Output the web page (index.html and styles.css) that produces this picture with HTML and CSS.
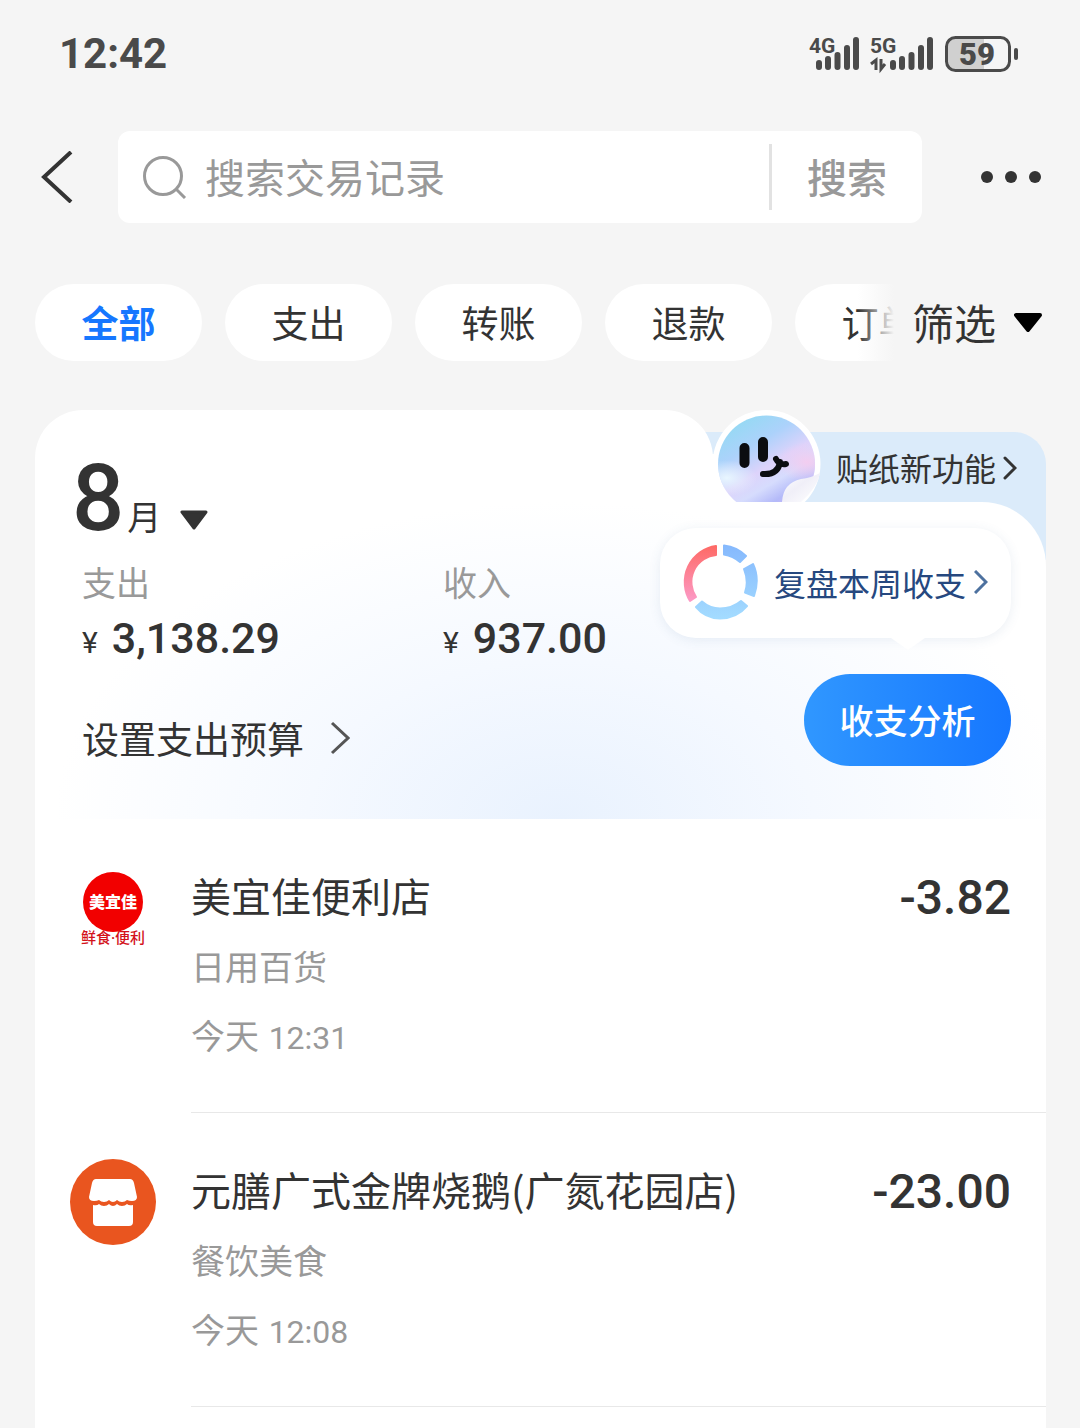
FILE: index.html
```html
<!DOCTYPE html>
<html lang="zh-CN">
<head>
<meta charset="utf-8">
<meta name="viewport" content="width=device-width, initial-scale=1">
<title>账单</title>
<link rel="stylesheet" href="styles.css">
</head>
<body>
<div class="status">
  <time class="clock">12:42</time>
  <svg class="indicators" width="210" height="40" viewBox="0 0 210 40" aria-hidden="true">
    <g fill="#4a4a4a" font-family="Roboto, sans-serif" font-weight="700" font-size="21">
      <text x="0" y="19">4G</text>
      <text x="61" y="19">5G</text>
    </g>
    <g fill="none" stroke="#4a4a4a" stroke-width="6" stroke-linecap="round">
      <path d="M10 29v4M19 25v8M28.500 21v12M38 14v19M47 6v27"/>
      <path d="M84 29v4M93 25v8M102.500 21v12M112 14v19M121 6v27"/>
    </g>
    <path d="M62 30l5-4v10M72 25v10l4-5" fill="none" stroke="#4a4a4a" stroke-width="3"/>
    <path d="M147 3h28v33h-28q-9 0-9-9V12q0-9 9-9z" fill="#d0d0d0"/>
    <rect x="137.500" y="3.500" width="63" height="33" rx="9" fill="none" stroke="#4a4a4a" stroke-width="3"/>
    <rect x="205" y="14" width="4" height="12" rx="2" fill="#4a4a4a"/>
    <text x="168" y="31" text-anchor="middle" fill="#4a4a4a" font-family="Roboto, sans-serif" font-weight="900" font-size="31">59</text>
  </svg>
</div>

<header class="topbar">
  <button class="icon-btn" type="button" aria-label="返回">
    <svg width="32" height="52" viewBox="0 0 32 52"><path d="M30 1L3 26l27 25" fill="none" stroke="#333" stroke-width="4"/></svg>
  </button>
  <form class="search">
    <svg width="44" height="44" viewBox="0 0 44 44" aria-hidden="true"><g fill="none" stroke="#999" stroke-width="3"><circle cx="20" cy="21" r="18.500"/><path d="M33 34l9 9"/></g></svg>
    <input class="search-input" type="search" placeholder="搜索交易记录" aria-label="搜索交易记录">
    <button class="search-btn" type="submit">搜索</button>
  </form>
  <button class="icon-btn" type="button" aria-label="更多">
    <svg width="60" height="12" viewBox="0 0 60 12" fill="#333"><circle cx="6" cy="6" r="6"/><circle cx="30" cy="6" r="6"/><circle cx="54" cy="6" r="6"/></svg>
  </button>
</header>

<nav class="filters">
  <div class="chips">
    <button class="chip chip-active" type="button">全部</button>
    <button class="chip" type="button">支出</button>
    <button class="chip" type="button">转账</button>
    <button class="chip" type="button">退款</button>
    <button class="chip" type="button">订单</button>
  </div>
  <button class="filter-btn" type="button"><span>筛选</span>
    <svg width="28" height="20" viewBox="0 0 28 20"><path d="M2 2h24L14 17z" stroke="#000" stroke-width="4" stroke-linejoin="round"/></svg>
  </button>
</nav>

<main class="card">
  <section class="summary">
    <a class="promo" href="#">
      <svg class="sticker" width="120" height="92" viewBox="0 0 120 92" aria-hidden="true">
        <defs>
          <linearGradient id="face" x1="0.200" y1="0" x2="0.800" y2="1">
            <stop offset="0" stop-color="#8ddcf1"/><stop offset=".3" stop-color="#acd2fb"/><stop offset=".5" stop-color="#ddd3fb"/><stop offset=".63" stop-color="#d6dcfd"/><stop offset=".76" stop-color="#b4baf9"/><stop offset="1" stop-color="#e7aef4"/>
          </linearGradient>
          <radialGradient id="glow"><stop offset="0" stop-color="#e8f6ff"/><stop offset="1" stop-color="#e8f6ff" stop-opacity="0"/></radialGradient>
          <radialGradient id="rose"><stop offset="0" stop-color="#f3cdf0"/><stop offset="1" stop-color="#f3cdf0" stop-opacity="0"/></radialGradient>
          <linearGradient id="curl" x1="0" y1="0" x2="1" y2="1"><stop offset="0" stop-color="#fff"/><stop offset=".45" stop-color="#f0eff8"/><stop offset="1" stop-color="#fff"/></linearGradient>
          <clipPath id="disc"><circle cx="61.500" cy="54" r="48.500"/></clipPath>
        </defs>
        <path d="M6 44v48h62L12 44z" fill="#fff"/>
        <circle cx="61.500" cy="54" r="54" fill="#fff"/>
        <g clip-path="url(#disc)">
          <path d="M10 0h110v110H10z" fill="url(#face)"/>
          <ellipse cx="22" cy="68" rx="30" ry="18" fill="url(#glow)"/>
          <ellipse cx="102" cy="52" rx="30" ry="20" fill="url(#rose)"/>
        </g>
        <path d="M77 92q1-19 19-23 10-1 19-6-2 14-19 29z" fill="url(#curl)"/>
        <g fill="none" stroke="#0b0d10" stroke-linecap="round">
          <path d="M39.500 38v15M58 32v15" stroke-width="10"/>
          <path d="M58 64q15 1 17-12M71 49q3 6 10 5" stroke-width="6"/>
        </g>
      </svg>
      <span>贴纸新功能</span>
      <svg width="14" height="24" viewBox="0 0 14 24" aria-hidden="true"><path d="M2 2l10 10L2 22" fill="none" stroke="#333" stroke-width="3" stroke-linecap="round"/></svg>
    </a>

    <div class="overview">
      <button class="month" type="button"><span class="month-num">8</span><span class="month-unit">月</span>
        <svg class="month-caret" width="28" height="20" viewBox="0 0 28 20"><path d="M2 2h24L14 18z" fill="#333" stroke="#333" stroke-width="3" stroke-linejoin="round"/></svg>
      </button>
      <dl class="stats">
        <div><dt>支出</dt><dd><span class="yen">¥</span>3,138.29</dd></div>
        <div><dt>收入</dt><dd><span class="yen">¥</span>937.00</dd></div>
      </dl>
      <a class="budget" href="#">设置支出预算
        <svg width="20" height="34" viewBox="0 0 20 34" aria-hidden="true"><path d="M2 2l16 15L2 32" fill="none" stroke="#555" stroke-width="3"/></svg>
      </a>
    </div>

    <div class="actions">
      <a class="bubble" href="#">
        <svg width="76" height="76" viewBox="0 0 76 76" aria-hidden="true">
          <defs>
            <linearGradient id="red" x1="0" y1="0" x2="0" y2="1"><stop offset="0" stop-color="#fe6a66"/><stop offset="1" stop-color="#fc9ac6"/></linearGradient>
            <linearGradient id="blue" gradientUnits="userSpaceOnUse" x1="0" y1="0" x2="0" y2="76"><stop offset="0" stop-color="#85b8fd"/><stop offset="1" stop-color="#a4dcff"/></linearGradient>
          </defs>
          <g stroke-width="2" stroke-linejoin="round">
            <path d="M34 2v9A27 27 0 0 0 14 53l-6 4A36.500 36.500 0 0 1 34 2z" fill="url(#red)" stroke="url(#red)"/>
            <path d="M42 1.500Q55 3 64 12l-6 6q-7-6-16-7.500zM71 20q7 15 1 32l-9-3.500q4-11-1-23.500zM65 62q-10 12-27 12.500Q23 74 14 63l6-5.500q8 7 18 7 12 0 21-7.500z" fill="url(#blue)" stroke="url(#blue)"/>
          </g>
        </svg>
        <span>复盘本周收支</span>
        <svg width="14" height="24" viewBox="0 0 14 24" aria-hidden="true"><path d="M1 1l11 11L1 23" fill="none" stroke="#4d719f" stroke-width="3"/></svg>
      </a>
      <button class="analyze" type="button">收支分析</button>
    </div>
  </section>

  <ul class="records">
    <li class="record">
      <svg class="logo" width="86" height="86" viewBox="0 0 86 86" role="img" aria-label="美宜佳">
        <circle cx="43" cy="37" r="30" fill="#f20000"/>
        <g font-family="Roboto, 'Noto Sans CJK SC', sans-serif" text-anchor="middle">
          <text x="43" y="43" fill="#fff" font-size="16" font-weight="900">美宜佳</text>
          <text x="43" y="78" fill="#d3121b" font-size="15" font-weight="500">鲜食·便利</text>
        </g>
      </svg>
      <div class="detail">
        <h2 class="name">美宜佳便利店</h2>
        <p class="kind">日用百货</p>
        <p class="when">今天 <time>12:31</time></p>
      </div>
      <data class="amount" value="-3.82">-3.82</data>
    </li>
    <li class="record">
      <svg class="logo" width="86" height="86" viewBox="0 0 86 86" role="img" aria-label="商家">
        <circle cx="43" cy="43" r="43" fill="#e9551f"/>
        <path d="M26 20h34q3 0 4 4l3 14q0 4-5 4-3 0-5-1-2 2-5 2t-5-2q-2 2-4 2t-4-2q-2 2-5 2t-5-2q-2 1-5 1-5 0-5-4l3-14q1-4 4-4zM23 46q4 1 6-1 2 2 5 2t5-2q2 2 4 2t4-2q2 2 5 2t5-2q2 2 6 1v17q0 4-4 4H27q-4 0-4-4z" fill="#fff"/>
      </svg>
      <div class="detail">
        <h2 class="name">元膳广式金牌烧鹅(广氮花园店)</h2>
        <p class="kind">餐饮美食</p>
        <p class="when">今天 <time>12:08</time></p>
      </div>
      <data class="amount" value="-23.00">-23.00</data>
    </li>
  </ul>
</main>
</body>
</html>
```
FILE: styles.css
```css
* { box-sizing: border-box; margin: 0; padding: 0; }

body {
  display: flex;
  flex-direction: column;
  min-height: 100vh;
  background: #f5f5f5;
  color: #333;
  font-family: "Noto Sans CJK SC", sans-serif;
}

button, input {
  border: 0;
  background: none;
  color: inherit;
  font: inherit;
}

a { color: inherit; text-decoration: none; }
svg { display: block; flex: none; }

/* status bar */
.status {
  display: flex;
  align-items: center;
  justify-content: space-between;
  height: 108px;
  padding: 0 61px 0 59px;
}
.indicators { overflow: visible; }
.clock { font: 700 42px/54px Roboto, sans-serif; color: #4a4a4a; }

/* search row */
.topbar {
  display: flex;
  align-items: center;
  padding: 23px 39px 0 41px;
}
.search {
  display: flex;
  flex: 1;
  align-items: center;
  height: 92px;
  min-width: 0;
  margin: 0 59px 0 45px;
  padding-left: 25px;
  border-radius: 12px;
  background: #fff;
}
.search-input {
  flex: 1;
  min-width: 0;
  height: 66px;
  padding: 0 0 2px 18px;
  font-size: 40px;
  outline: 0;
}
.search-input::placeholder { color: #999; opacity: 1; }
.search-btn {
  width: 153px;
  height: 66px;
  padding-bottom: 2px;
  border-left: 3px solid #e2e2e2;
  color: #999;
  font-size: 40px;
  font-weight: 500;
  line-height: 60px;
}

/* filter chips */
.filters {
  display: flex;
  align-items: center;
  padding: 61px 38px 0 35px;
}
.chips {
  position: relative;
  display: flex;
  flex: 1;
  gap: 23px;
  min-width: 0;
  overflow: hidden;
}
.chips::after {
  content: "";
  position: absolute;
  inset: 0 0 0 auto;
  width: 36px;
  background: linear-gradient(90deg, #f5f5f500, #f5f5f5);
}
.chip {
  flex: none;
  width: 167px;
  height: 77px;
  padding-bottom: 2px;
  border-radius: 39px;
  background: #fff;
  font-size: 37px;
  line-height: 60px;
}
.chip-active { color: #1677ff; font-weight: 700; }
.filter-btn {
  display: flex;
  align-items: center;
  gap: 18px;
  margin-left: 18px;
  font-size: 42px;
  line-height: 60px;
}
.filter-btn span { padding-bottom: 2px; }

/* bill card */
.card {
  display: flex;
  flex: 1;
  flex-direction: column;
  margin: 49px 34px 0 35px;
}
.summary {
  position: relative;
  z-index: 0;
  display: flex;
  justify-content: space-between;
  padding: 0 35px 53px 37px;
}
.summary::before {
  content: "";
  position: absolute;
  z-index: -2;
  inset: 0 333px auto 0;
  height: 93px;
  border-radius: 48px 48px 0 0;
  background: #fff;
}
.summary::after {
  content: "";
  position: absolute;
  z-index: -1;
  inset: 92px 0 0;
  border-radius: 0 64px 0 0;
  background: radial-gradient(ellipse 50% 100% at 52% 100%, #e9f2fe, #f5f9ff 50%, #fff) #fff;
}
.promo {
  position: absolute;
  z-index: -3;
  top: 22px;
  right: 0;
  display: flex;
  align-items: flex-start;
  gap: 7px;
  width: 341px;
  height: 128px;
  padding: 10px 0 0 131px;
  border-radius: 0 32px 0 0;
  background: #dbebfa;
  font-size: 32px;
  line-height: 50px;
}
.promo svg { margin-top: 14px; }
.promo .sticker { position: absolute; top: -22px; left: 0; margin: 0; }

.overview { padding-top: 43px; }
.month {
  display: flex;
  align-items: baseline;
  height: 92px;
  text-align: left;
}
.month-num { font: 500 92px/92px Roboto, sans-serif; }
.month-unit { margin-left: 3px; font-size: 34px; line-height: 50px; }
.month-caret { margin-left: 19px; }
.stats {
  display: grid;
  grid-template-columns: 361px 1fr;
  margin: 12px 0 0 10px;
}
.stats dt { color: #999; font-size: 34px; line-height: 50px; }
.stats dd { margin-top: 4px; font: 500 43px/54px Roboto, sans-serif; white-space: nowrap; }
.yen { margin-right: 14px; font-size: 30px; font-weight: 400; }
.budget {
  display: flex;
  align-items: center;
  gap: 26px;
  margin: 41px 0 0 10px;
  font-size: 37px;
  line-height: 54px;
}

.actions {
  display: flex;
  flex-direction: column;
  align-items: flex-end;
  gap: 36px;
  padding-top: 118px;
}
.bubble {
  position: relative;
  display: flex;
  align-items: center;
  gap: 16px;
  height: 110px;
  padding: 0 23px 2px 22px;
  border-radius: 36px;
  background: #fff;
  box-shadow: 0 2px 12px #3c64961a;
  color: #26487f;
  font-size: 32px;
  line-height: 50px;
}
.bubble span { margin-right: -8px; white-space: nowrap; }
.bubble::after {
  content: "";
  position: absolute;
  top: 110px;
  right: 86px;
  border: solid transparent;
  border-width: 12px 17px 0;
  border-top-color: #fff;
}
.analyze {
  width: 207px;
  height: 92px;
  border-radius: 46px;
  background: linear-gradient(90deg, #3097ff, #1677ff);
  color: #fff;
  font-size: 34px;
  font-weight: 500;
  line-height: 88px;
}

/* transactions */
.records { flex: 1; background: #fff; list-style: none; }
.record { display: flex; align-items: flex-start; padding-left: 35px; }
.logo { margin: 46px 35px 0 0; }
.detail {
  flex: 1;
  padding: 46px 0 52px;
  border-bottom: 1px solid #e8e8e8;
}
.name { font-size: 40px; font-weight: 400; line-height: 60px; white-space: nowrap; }
.kind, .when { color: #999; font-size: 34px; line-height: 50px; }
.kind { margin-top: 16px; }
.when { margin-top: 19px; }
.when time { margin-left: 2px; font: 400 32px/32px Roboto, sans-serif; }
.amount {
  align-self: stretch;
  padding: 49px 35px 0 0;
  border-bottom: 1px solid #e8e8e8;
  font: 500 48px/60px Roboto, sans-serif;
}
```
